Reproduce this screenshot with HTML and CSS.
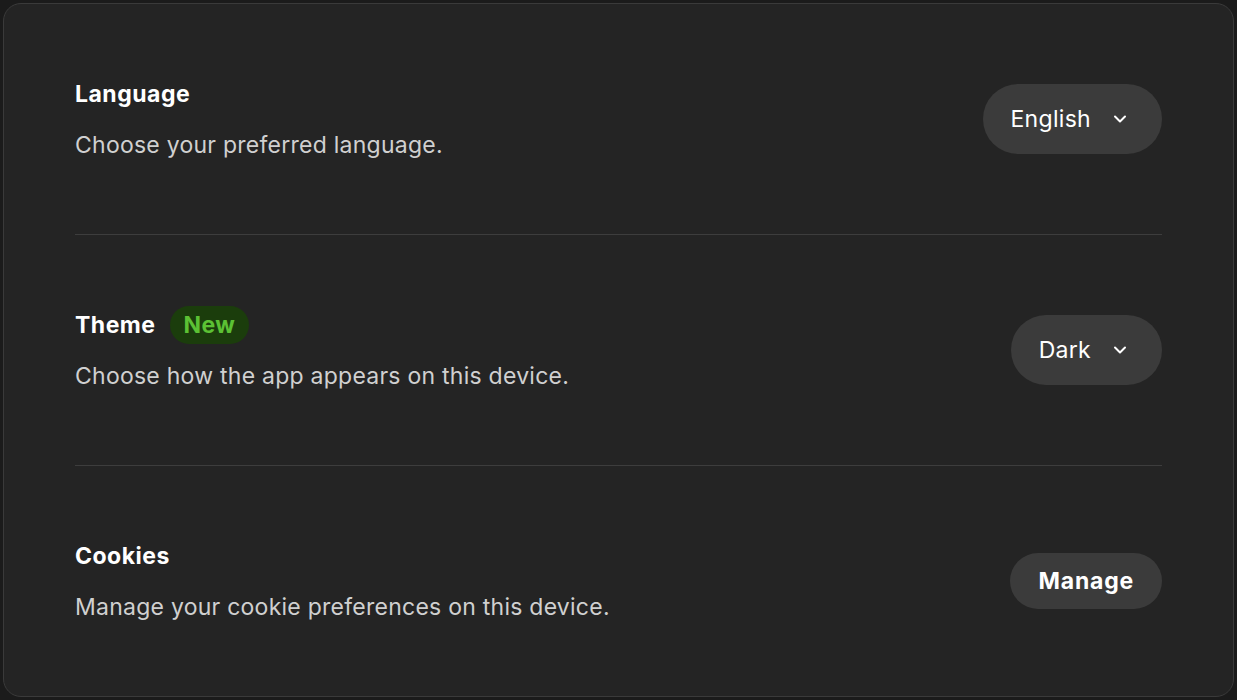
FILE: index.html
```html
<!DOCTYPE html>
<html>
<head>
<meta charset="utf-8">
<link rel="stylesheet" href="styles.css">
</head>
<body>
<div class="panel">
  <div class="row">
    <div class="info">
      <div class="title">Language</div>
      <div class="desc">Choose your preferred language.</div>
    </div>
    <button class="select">English <svg class="chev" viewBox="0 0 14 10" width="14" height="10"><path d="M2 2.5 L7 7.5 L12 2.5" fill="none" stroke="#fff" stroke-width="2" stroke-linecap="round" stroke-linejoin="round"/></svg></button>
  </div>
  <div class="row">
    <div class="info">
      <div class="title">Theme <span class="badge">New</span></div>
      <div class="desc">Choose how the app appears on this device.</div>
    </div>
    <button class="select">Dark <svg class="chev" viewBox="0 0 14 10" width="14" height="10"><path d="M2 2.5 L7 7.5 L12 2.5" fill="none" stroke="#fff" stroke-width="2" stroke-linecap="round" stroke-linejoin="round"/></svg></button>
  </div>
  <div class="row">
    <div class="info">
      <div class="title">Cookies</div>
      <div class="desc">Manage your cookie preferences on this device.</div>
    </div>
    <button class="manage">Manage</button>
  </div>
</div>
</body>
</html>
```
FILE: styles.css
```css
html, body {
  margin: 0;
  height: 100%;
  background: #1b1b1b;
}
body {
  padding: 3px;
  box-sizing: border-box;
  font-family: Inter, "Noto Sans", sans-serif;
}
.panel {
  height: 694px;
  box-sizing: border-box;
  background: #242424;
  border: 1px solid #3a3a3a;
  border-radius: 18px;
  padding: 0 71px;
  display: flex;
  flex-direction: column;
}
.row {
  flex: 1;
  display: flex;
  align-items: center;
  justify-content: space-between;
  border-bottom: 1px solid #3d3d3d;
}
.row:last-child {
  border-bottom: none;
}
.info {
  display: flex;
  flex-direction: column;
  gap: 21px;
}
.title {
  display: flex;
  align-items: center;
  gap: 14px;
  height: 30px;
  font-size: 23px;
  font-weight: 700;
  color: #ffffff;
  letter-spacing: 0.5px;
}
.desc {
  line-height: 30px;
  font-size: 23px;
  color: #d0d0d0;
  letter-spacing: 0.25px;
}
.badge {
  display: inline-flex;
  align-items: center;
  height: 38px;
  padding: 0 14px;
  border-radius: 19px;
  background: #1b3d0c;
  color: #5cc134;
  font-weight: 700;
  letter-spacing: 0.4px;
}
.select, .manage {
  font-family: inherit;
  font-size: 23px;
  color: #ffffff;
  background: #3b3b3b;
  border: none;
  display: inline-flex;
  align-items: center;
  letter-spacing: 0.3px;
}
.select {
  height: 70px;
  border-radius: 35px;
  padding: 0 35px 0 28px;
  gap: 22px;
}
.manage {
  height: 56px;
  border-radius: 28px;
  padding: 0 28px 0 29px;
  font-weight: 700;
  letter-spacing: 0.8px;
}
.chev {
  display: block;
}
```
